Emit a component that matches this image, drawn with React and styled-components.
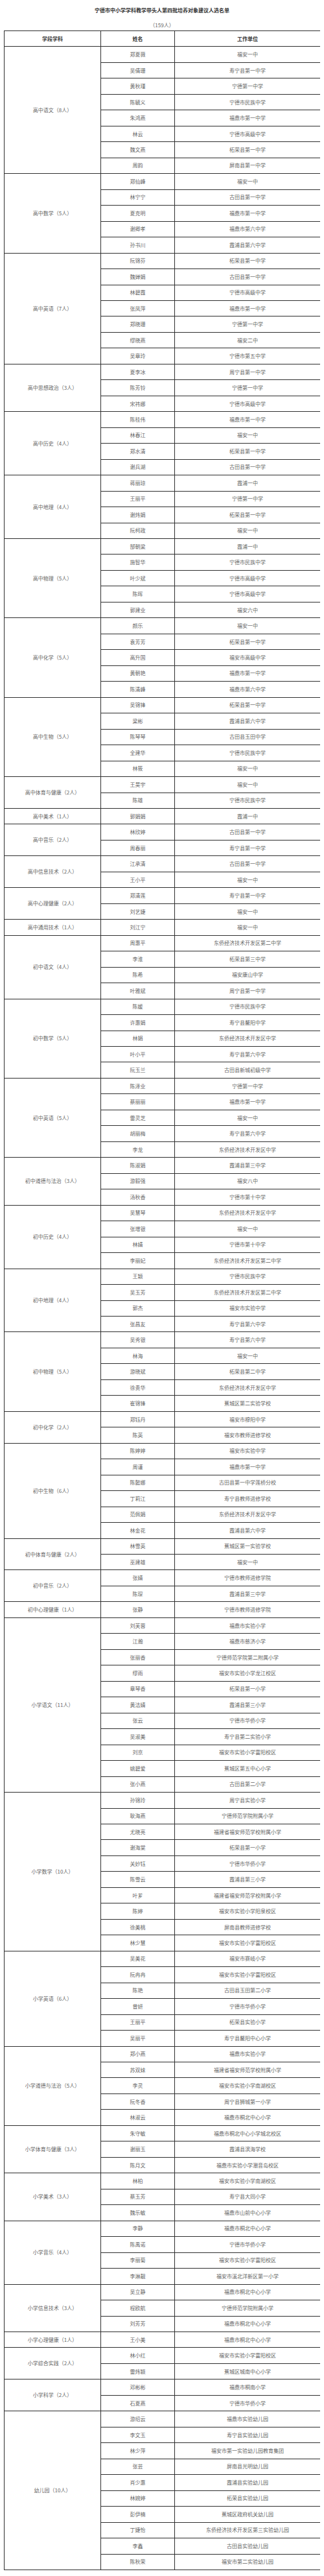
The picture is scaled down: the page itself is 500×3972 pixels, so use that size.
import React from 'react';
import styled, { createGlobalStyle } from 'styled-components';

const GlobalStyle = createGlobalStyle`
  html, body {
    margin: 0;
    padding: 0;
    background: #fff;
  }
  body {
    font-family: "Noto Sans CJK SC", "Noto Sans", sans-serif;
  }
`;

const Page = styled.div`
  width: 500px;
  padding: 9px 0 8px;
`;

const Title = styled.h1`
  margin: 0;
  height: 14px;
  line-height: 14px;
  font-size: 8px;
  font-weight: 700;
  color: #333;
  text-align: center;
`;

const Count = styled.p`
  margin: 9px 0 0;
  height: 15px;
  line-height: 14px;
  font-size: 8px;
  color: #666;
  text-align: center;
`;

// grid with 1px gaps over a dark background draws the ruled lines
const Sheet = styled.div`
  width: 488px;
  margin: 0 6px;
  display: grid;
  grid-template-columns: 148px 113px 224px;
  grid-auto-rows: 23.475px;
  gap: 1px;
  padding: 1px;
  box-sizing: border-box;
  background: #2e2e2e;
`;

const Cell = styled.div`
  display: flex;
  align-items: center;
  justify-content: center;
  background: #fff;
  font-size: 8px;
  line-height: 10px;
  font-weight: ${(p) => (p.$head ? 700 : 400)};
  color: ${(p) => (p.$head ? '#333' : '#666')};
  white-space: nowrap;
  grid-row: ${(p) => (p.$span ? `span ${p.$span}` : 'auto')};
`;

const groups = [
  ['高中语文（8人）', [
    ['郑夏薇', '福安一中'], ['吴倩珊', '寿宁县第一中学'], ['黄秋瑾', '宁德第一中学'], ['陈毓义', '宁德市民族中学'],
    ['朱鸿燕', '福鼎市第一中学'], ['林云', '宁德市高级中学'], ['魏文燕', '柘荣县第一中学'], ['周韵', '屏南县第一中学'],
  ]],
  ['高中数学（5人）', [
    ['郑仙峰', '福安一中'], ['林宁宁', '古田县第一中学'], ['夏克明', '福鼎市第一中学'], ['谢卿孝', '福鼎市第六中学'],
    ['孙书川', '霞浦县第六中学'],
  ]],
  ['高中英语（7人）', [
    ['阮锦芬', '柘荣县第一中学'], ['魏婵娟', '古田县第一中学'], ['林碧霞', '宁德市高级中学'], ['张凤萍', '福鼎市第一中学'],
    ['郑晓珊', '宁德第一中学'], ['缪晓燕', '福安二中'], ['吴章玲', '宁德市第五中学'],
  ]],
  ['高中思想政治（3人）', [
    ['夏李冰', '周宁县第一中学'], ['陈芳铃', '宁德第一中学'], ['宋祎娜', '宁德市高级中学'],
  ]],
  ['高中历史（4人）', [
    ['陈桂伟', '福鼎市第一中学'], ['林春江', '福安一中'], ['郑水清', '柘荣县第一中学'], ['谢兵湖', '古田县第一中学'],
  ]],
  ['高中地理（4人）', [
    ['蒋丽琼', '霞浦一中'], ['王丽平', '宁德第一中学'], ['谢炜娟', '柘荣县第一中学'], ['阮柯政', '福安一中'],
  ]],
  ['高中物理（5人）', [
    ['郜朝梁', '霞浦一中'], ['施智华', '宁德市民族中学'], ['叶少斌', '宁德市高级中学'], ['陈晖', '宁德市高级中学'],
    ['郭建业', '福安六中'],
  ]],
  ['高中化学（5人）', [
    ['颜乐', '福安一中'], ['袁芳芳', '柘荣县第一中学'], ['高升国', '福安市高级中学'], ['黄朝艳', '福鼎市第一中学'],
    ['陈清峰', '福鼎市第六中学'],
  ]],
  ['高中生物（5人）', [
    ['吴锦锋', '柘荣县第一中学'], ['梁彬', '霞浦县第六中学'], ['陈琴琴', '古田县玉田中学'], ['全建华', '宁德市民族中学'],
    ['林筱', '福安一中'],
  ]],
  ['高中体育与健康（2人）', [
    ['王昊宇', '福安一中'], ['陈雄', '宁德市民族中学'],
  ]],
  ['高中美术（1人）', [
    ['郭娟娟', '霞浦一中'],
  ]],
  ['高中音乐（2人）', [
    ['林欣婷', '古田县第一中学'], ['周春丽', '寿宁县第一中学'],
  ]],
  ['高中信息技术（2人）', [
    ['江承清', '古田县第一中学'], ['王小平', '福安一中'],
  ]],
  ['高中心理健康（2人）', [
    ['郑清莲', '寿宁县第一中学'], ['刘艺婕', '福安一中'],
  ]],
  ['高中通用技术（1人）', [
    ['刘江宁', '福安一中'],
  ]],
  ['初中语文（4人）', [
    ['周惠平', '东侨经济技术开发区第二中学'], ['李淮', '柘荣县第三中学'], ['陈希', '福安康山中学'], ['叶雅斌', '周宁县第一中学'],
  ]],
  ['初中数学（5人）', [
    ['陈媛', '宁德市民族中学'], ['许惠娟', '寿宁县鳌阳中学'], ['林娟', '东侨经济技术开发区中学'], ['叶小平', '寿宁县第六中学'],
    ['阮玉兰', '古田县新城初级中学'],
  ]],
  ['初中英语（5人）', [
    ['陈泽业', '宁德第一中学'], ['蔡丽丽', '福鼎市第一中学'], ['雷灵芝', '福安一中'], ['胡丽梅', '寿宁县第六中学'],
    ['李龙', '东侨经济技术开发区中学'],
  ]],
  ['初中道德与法治（3人）', [
    ['陈淑娟', '霞浦县第三中学'], ['游毅强', '福安八中'], ['汤秋香', '宁德市第十中学'],
  ]],
  ['初中历史（4人）', [
    ['吴慧琴', '东侨经济技术开发区中学'], ['张增银', '福安一中'], ['林婧', '宁德市第十中学'], ['李丽妃', '东侨经济技术开发区第二中学'],
  ]],
  ['初中地理（4人）', [
    ['王颖', '宁德市民族中学'], ['吴玉芳', '东侨经济技术开发区第二中学'], ['郭杰', '福安市实验中学'], ['张昌友', '寿宁县第六中学'],
  ]],
  ['初中物理（5人）', [
    ['吴秀银', '寿宁县第六中学'], ['林海', '福安一中'], ['游晓斌', '柘荣县第二中学'], ['徐贵华', '东侨经济技术开发区中学'],
    ['崔锦锋', '蕉城区第二实验学校'],
  ]],
  ['初中化学（2人）', [
    ['郑钰丹', '福安市穆阳中学'], ['陈英', '福安市教师进修学校'],
  ]],
  ['初中生物（6人）', [
    ['陈婷婷', '福安市实验中学'], ['周谨', '福鼎市第一中学'], ['陈懿娜', '古田县第一中学莲桥分校'], ['丁莉江', '寿宁县教师进修学校'],
    ['范佩娟', '东侨经济技术开发区中学'], ['林金花', '霞浦县第六中学'],
  ]],
  ['初中体育与健康（2人）', [
    ['林雪英', '蕉城区第一实验学校'], ['巫建雄', '福安一中'],
  ]],
  ['初中音乐（2人）', [
    ['张婧', '宁德市教师进修学院'], ['陈琛', '霞浦县第三中学'],
  ]],
  ['初中心理健康（1人）', [
    ['张静', '宁德市教师进修学院'],
  ]],
  ['小学语文（11人）', [
    ['刘芙蓉', '福鼎市实验小学'], ['江瀚', '福鼎市慈济小学'], ['张丽香', '宁德师范学院第二附属小学'], ['缪雨', '福安市实验小学龙江校区'],
    ['章琴香', '柘荣县第一小学'], ['黄洁婧', '霞浦县第三小学'], ['张云', '宁德市华侨小学'], ['吴淑美', '寿宁县第二实验小学'],
    ['刘京', '福安市实验小学富阳校区'], ['姚碧爱', '蕉城区第五中心小学'], ['张小燕', '古田县第二小学'],
  ]],
  ['小学数学（10人）', [
    ['孙锦玲', '周宁县实验小学'], ['耿海燕', '宁德师范学院附属小学'], ['尤晓亮', '福建省福安师范学校附属小学'], ['谢海棠', '柘荣县第一小学'],
    ['关妙钰', '宁德市华侨小学'], ['陈雪云', '霞浦县第三小学'], ['叶芗', '福建省福安师范学校附属小学'], ['陈婷', '福安市实验小学阳泉校区'],
    ['徐美桃', '屏南县教师进修学校'], ['林少慧', '福安市实验小学富阳校区'],
  ]],
  ['小学英语（6人）', [
    ['吴美花', '福安市赛岐小学'], ['阮冉冉', '福安市实验小学富阳校区'], ['陈艳', '古田县玉田第二小学'], ['曾妍', '宁德市华侨小学'],
    ['王丽平', '柘荣县实验小学'], ['吴丽平', '寿宁县鳌阳中心小学'],
  ]],
  ['小学道德与法治（5人）', [
    ['郑小燕', '福鼎市实验小学'], ['苏双妹', '福建省福安师范学校附属小学'], ['李灵', '福安市实验小学南湖校区'], ['阮冬香', '周宁县狮城第一小学'],
    ['林淑云', '福鼎市桐北中心小学'],
  ]],
  ['小学体育与健康（3人）', [
    ['朱守敏', '福鼎市桐北中心小学城北校区'], ['谢丽玉', '霞浦县滨海学校'], ['陈月文', '福鼎市实验小学潮音岛校区'],
  ]],
  ['小学美术（3人）', [
    ['林柏', '福安市实验小学南湖校区'], ['蔡玉芳', '寿宁县大同小学'], ['魏乐敏', '福鼎市山前中心小学'],
  ]],
  ['小学音乐（4人）', [
    ['李静', '福鼎市桐北中心小学'], ['陈禹诺', '宁德市华侨小学'], ['李丽菊', '福安市实验小学富阳校区'], ['李淋靓', '福安市溪北洋新区第一小学'],
  ]],
  ['小学信息技术（3人）', [
    ['吴立静', '福鼎市桐北中心小学'], ['程欧航', '宁德师范学院附属小学'], ['刘芳芳', '福鼎市桐北中心小学'],
  ]],
  ['小学心理健康（1人）', [
    ['王小美', '福鼎市桐北中心小学'],
  ]],
  ['小学综合实践（2人）', [
    ['林小红', '福安市实验小学富阳校区'], ['雷炜颖', '蕉城区城南中心小学'],
  ]],
  ['小学科学（2人）', [
    ['邓彬彬', '福鼎市桐南小学'], ['石夏燕', '宁德市华侨小学'],
  ]],
  ['幼儿园（10人）', [
    ['游绍云', '福鼎市实验幼儿园'], ['李文玉', '寿宁县实验幼儿园'], ['林少萍', '福安市第一实验幼儿园教育集团'], ['张芸', '屏南县光明幼儿园'],
    ['肖少惠', '霞浦县实验幼儿园'], ['林婉婷', '柘荣县实验幼儿园'], ['彭伊楠', '蕉城区政府机关幼儿园'], ['丁婕怡', '东侨经济技术开发区第三实验幼儿园'],
    ['李鑫', '古田县实验幼儿园'], ['陈秋荣', '福安市第二实验幼儿园'],
  ]],
];

export default function App() {
  return (
    <Page>
      <GlobalStyle />
      <Title>宁德市中小学学科教学带头人第四批培养对象建议人选名单</Title>
      <Count>（159人）</Count>
      <Sheet>
        <Cell $head>学段学科</Cell>
        <Cell $head>姓名</Cell>
        <Cell $head>工作单位</Cell>
        {groups.map(([subject, people]) => (
          <React.Fragment key={subject}>
            <Cell $span={people.length}>{subject}</Cell>
            {people.map(([name, unit], i) => (
              <React.Fragment key={subject + i}>
                <Cell>{name}</Cell>
                <Cell>{unit}</Cell>
              </React.Fragment>
            ))}
          </React.Fragment>
        ))}
      </Sheet>
    </Page>
  );
}
